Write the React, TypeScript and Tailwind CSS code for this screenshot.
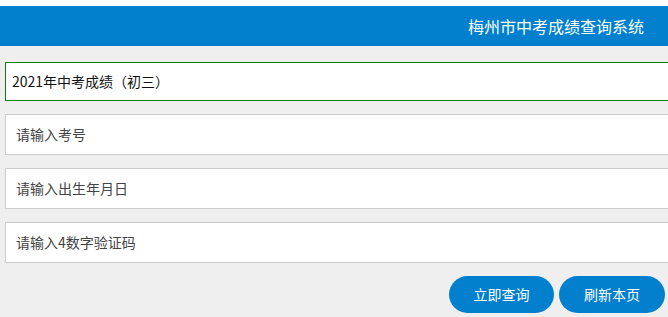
export default function App() {
  const font = "font-['Noto_Sans_CJK_SC','Microsoft_YaHei',sans-serif]";
  const placeholders = ["请输入考号", "请输入出生年月日", "请输入4数字验证码"];

  return (
    <div className={`w-[668px] h-[317px] overflow-hidden bg-[#efefef] ${font}`}>
      <div className="h-[6px] bg-white" />
      <header className="flex h-10 items-center justify-end bg-[#0280ce] pr-[24px] text-[16px] text-white">
        梅州市中考成绩查询系统
      </header>

      <div className="pl-[5px] pt-4">
        <div className="flex h-[39px] w-[700px] items-center border border-[#0a7d0a] bg-white pl-[6px] text-[14px] text-[#111]">
          2021年中考成绩（初三）
        </div>

        {placeholders.map((p) => (
          <div
            key={p}
            className="mt-[13px] flex h-[41px] w-[700px] items-center border border-[#cccccc] bg-white pl-[10px] text-[14px] text-[#444]"
          >
            {p}
          </div>
        ))}
      </div>

      <div className="mt-[13px] flex justify-end gap-[5px] pr-[3px]">
        <button className="h-[37px] w-[105px] rounded-full bg-[#0280ce] text-[14px] text-white">
          立即查询
        </button>
        <button className="h-[37px] w-[106px] rounded-full bg-[#0280ce] text-[14px] text-white">
          刷新本页
        </button>
      </div>
    </div>
  );
}
